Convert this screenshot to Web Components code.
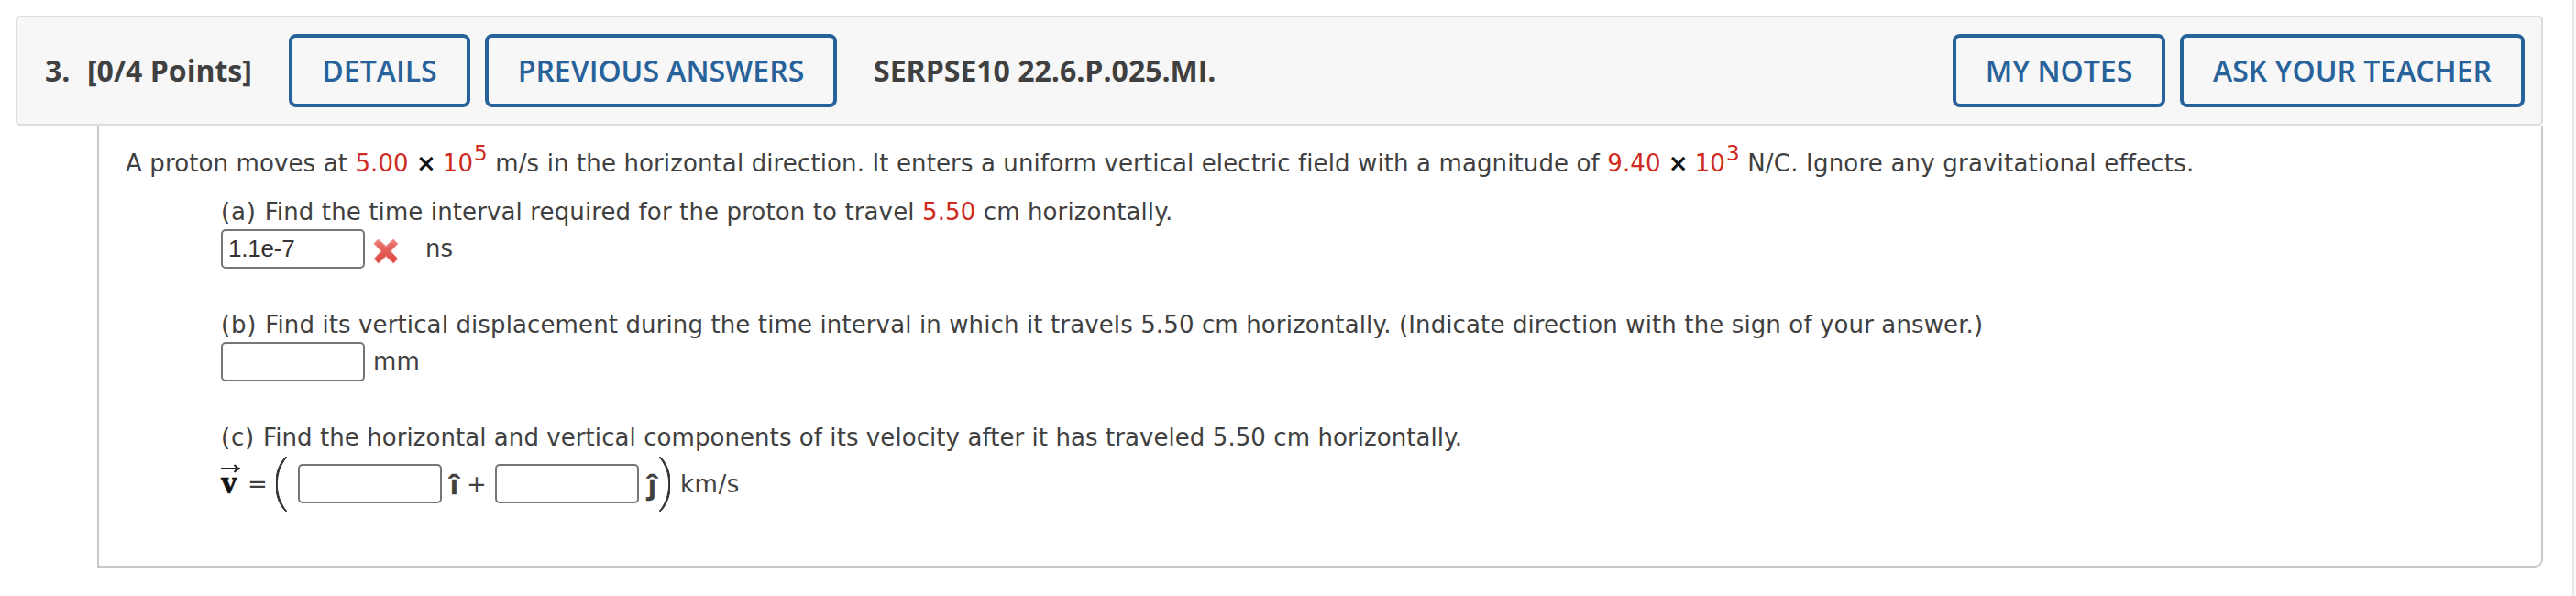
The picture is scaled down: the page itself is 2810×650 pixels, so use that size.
<!DOCTYPE html>
<html lang="en">
<head>
<meta charset="utf-8">
<title>Question 3</title>
<style>
html, body { margin: 0; height: 650px; background: #fff; overflow: hidden; }
</style>
</head>
<body>
<question-page></question-page>
<script>
const define = (name, html) => {
  const t = document.createElement('template');
  t.innerHTML = html.trim();
  customElements.define(name, class extends HTMLElement {
    constructor() {
      super();
      this.attachShadow({ mode: 'open' }).append(t.content.cloneNode(true));
    }
  });
};

define('outline-button', `
<style>
:host { display: block; flex: none; }
button { display: flex; align-items: center; justify-content: center; box-sizing: border-box; height: 80px; width: var(--w, auto);
  margin: 0; padding: 0; border: 4px solid #28629a; border-radius: 8px; background: #f7f7f7; color: #28629a;
  font: 600 32px/44px "Open Sans", sans-serif; white-space: nowrap; }
</style>
<button type="button"><slot></slot></button>`);

define('question-header', `
<style>
:host { display: flex; align-items: center; box-sizing: border-box; height: 120px; padding: 0 18px 0 30px;
  border: 2px solid #ddd; border-radius: 5px; background: #f7f7f7; color: #404040;
  font: 700 32px/44px "Open Sans", sans-serif; white-space: nowrap; }
.num { width: 46px; }
.points { width: 220px; }
.details { --w: 198px; margin-right: 16px; }
.previous { --w: 384px; }
.code { margin-left: 40px; flex: 1; }
.notes { --w: 232px; margin-right: 16px; }
.ask { --w: 376px; }
</style>
<span class="num">3.</span>
<span class="points">[0/4 Points]</span>
<outline-button class="details">DETAILS</outline-button>
<outline-button class="previous">PREVIOUS ANSWERS</outline-button>
<span class="code">SERPSE10 22.6.P.025.MI.</span>
<outline-button class="notes">MY NOTES</outline-button>
<outline-button class="ask">ASK YOUR TEACHER</outline-button>`);

define('random-value', `
<style>:host { display: inline; color: #cf2a1e; }</style><slot></slot>`);

define('times-sign', `
<style>:host { display: inline-block; width: 37px; text-align: center; text-indent: 1px; color: #111; font-weight: 700; letter-spacing: 0; }</style>×`);

define('power-of', `
<style>
:host { display: inline; color: #cf2a1e; }
sup { font-size: 23px; line-height: 0; vertical-align: baseline; position: relative; top: -12px; margin-left: 1px; }
</style><slot></slot><sup><slot name="exp"></slot></sup>`);

define('answer-box', `
<style>
:host { display: flex; align-items: flex-start; flex: none; box-sizing: border-box; width: 157px; height: 43px; padding: 0 6px;
  border: 2px solid #767676; border-radius: 5px; background: #fff; color: #333;
  font: 26px/38px "Liberation Sans", sans-serif; letter-spacing: -.2px; }
</style><slot></slot>`);

define('wrong-mark', `
<style>:host { display: block; flex: none; width: 28px; height: 28px; } svg { display: block; }</style>
<svg width="28" height="28" viewBox="0 0 28 28">
<defs><linearGradient id="g" x1="0" y1="0" x2="0" y2="1"><stop offset="0" stop-color="#ef8581"/><stop offset=".5" stop-color="#e4605c"/><stop offset="1" stop-color="#dc4440"/></linearGradient></defs>
<path d="M6 1.2 L14 8.4 L22 1 L27 5.8 L19.3 14 L27 22.3 L22.2 27.2 L14 19.6 L5.8 27.2 L1 22.3 L8.6 14 L1 5.8 Q3 2.4 6 1.2Z" fill="url(#g)" stroke="#f2a09c" stroke-width="1" stroke-linejoin="round"/>
<path d="M6 6 L14 13.7 L22 6 M6 22 L14 13.7 L22 22" fill="none" stroke="#e04f4b" stroke-opacity=".35" stroke-width="3"/>
</svg>`);

define('velocity-vector', `
<style>
:host { display: flex; flex-direction: column; flex: none; width: 29px; height: 43px; color: #111; }
svg { display: block; height: 14px; margin-bottom: -14px; }
b { display: block; height: 42px; font: 700 35px/41px "Liberation Serif", serif; letter-spacing: 0; -webkit-text-stroke: .6px #111; }
</style>
<svg width="21" height="14" viewBox="0 0 21 14"><path d="M0 5H19.5M14.8.8Q16.2 4 20 5Q16.2 6 14.8 9.2" fill="none" stroke="#222" stroke-width="2"/></svg>
<b>v</b>`);

define('tall-paren', `
<style>:host { display: block; flex: none; width: 12px; height: 60px; margin-top: -8px; } :host([close]) { transform: scaleX(-1); } svg { display: block; }</style>
<svg width="12" height="60" viewBox="0 0 12 60"><path d="M11.8.5C-2.2 16.5-2.2 43.5 11.8 59.5L10.8 59.8C-4 46-4 14 10.8 .2Z" fill="#333" stroke="#333" stroke-width="1"/></svg>`);

define('unit-vector', `
<style>:host { display: block; flex: none; font: 700 29px/43px "Open Sans", sans-serif; letter-spacing: 0; -webkit-text-stroke: .6px #404040; }</style><slot></slot>`);

define('question-body', `
<style>
:host { display: block; box-sizing: border-box; height: 482px; margin-left: 89px; padding: 22px 0 0 29px;
  border: 2px solid #c9c9c9; border-top: 0; border-bottom-right-radius: 9px; color: #404040;
  font: 26px/38px "DejaVu Sans", Verdana, sans-serif; letter-spacing: .12px; white-space: nowrap; }
p { margin: 0; height: 38px; }
i { font-style: normal; letter-spacing: .8px; }
.tail { letter-spacing: .2px; }
.pc { letter-spacing: .07px; }
.parts { padding: 15px 0 0 104px; }
.row { display: flex; align-items: flex-start; height: 43px; line-height: 42px; margin-bottom: 42px; }
.c { margin-top: 10px; }
.c span { line-height: 44px; }
.a wrong-mark { margin: 10px 29px 0 9px; }
.b span { margin-left: 9px; }
.eq { width: 31px; }
.i { width: 18px; margin-left: 9px; }
.j { width: 10px; margin-left: 10px; }
</style>
<p>A proton moves at <random-value>5.00</random-value><times-sign></times-sign><power-of>10<span slot="exp">5</span></power-of> m/s in the horizontal direction. It enters a uniform vertical electric field with a magnitude of <random-value>9.40</random-value><times-sign></times-sign><power-of>10<span slot="exp">3</span></power-of><span class="tail"> N/C. Ignore any gravitational effects.</span></p>
<div class="parts">
<p><i>(a) </i>Find the time interval required for the proton to travel <random-value>5.50</random-value> cm horizontally.</p>
<div class="row a"><answer-box>1.1e-7</answer-box><wrong-mark></wrong-mark><span>ns</span></div>
<p><i>(b) </i>Find its vertical displacement during the time interval in which it travels 5.50 cm horizontally. (Indicate direction with the sign of your answer.)</p>
<div class="row b"><answer-box></answer-box><span>mm</span></div>
<p class="pc"><i>(c) </i>Find the horizontal and vertical components of its velocity after it has traveled 5.50 cm horizontally.</p>
<div class="row c">
<velocity-vector></velocity-vector><span class="eq">=</span><tall-paren></tall-paren>
<answer-box style="margin-left:12px"></answer-box><unit-vector class="i">î</unit-vector><span class="eq">+</span>
<answer-box></answer-box><unit-vector class="j">ĵ</unit-vector><tall-paren close style="margin-left:2px"></tall-paren><span style="margin-left:11px;letter-spacing:.5px">km/s</span>
</div>
</div>`);

define('question-page', `
<style>
:host { display: flex; box-sizing: border-box; width: 2810px; height: 650px; background: #fff; }
main { width: 2757px; padding: 17px 0 0 17px; flex: none; }
.rail { box-sizing: border-box; width: 4px; height: 650px; margin-left: 32px; border-left: 2px solid #e8e8e8; background: #fafafa; }
</style>
<main><question-header></question-header><question-body></question-body></main>
<div class="rail"></div>`);
</script>
</body>
</html>
